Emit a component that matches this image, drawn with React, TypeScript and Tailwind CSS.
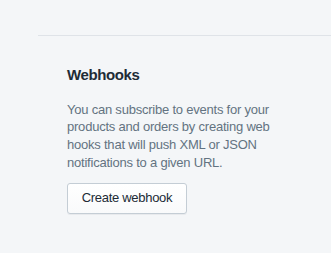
import React from 'react';

export default function App() {
  return (
    <div className="min-h-screen bg-[#f4f6f8] pt-[35px] pl-[38px]" style={{ fontFamily: '"Liberation Sans", Arial, sans-serif' }}>
      <div className="border-t border-[#dfe3e8]">
        <div className="pl-[29px] pt-[29px] pr-4">
          <h2 className="text-[15px] leading-5 font-bold tracking-[-0.4px] text-[#212b36]">Webhooks</h2>
          <p className="mt-[15.5px] w-[215px] text-[13px] leading-[17.8px] tracking-[-0.22px] text-[#637381]">
            You can subscribe to events for your products and orders by creating web hooks that will push XML or JSON notifications to a given URL.
          </p>
          <button className="mt-[11px] h-[31px] w-[120px] rounded-[3px] border border-[#c4cdd5] bg-gradient-to-b from-white to-[#f9fafb] text-[13px] tracking-[-0.3px] text-[#212b36] shadow-[0_1px_0_0_rgba(22,29,37,0.05)]">
            Create webhook
          </button>
        </div>
      </div>
    </div>
  );
}
